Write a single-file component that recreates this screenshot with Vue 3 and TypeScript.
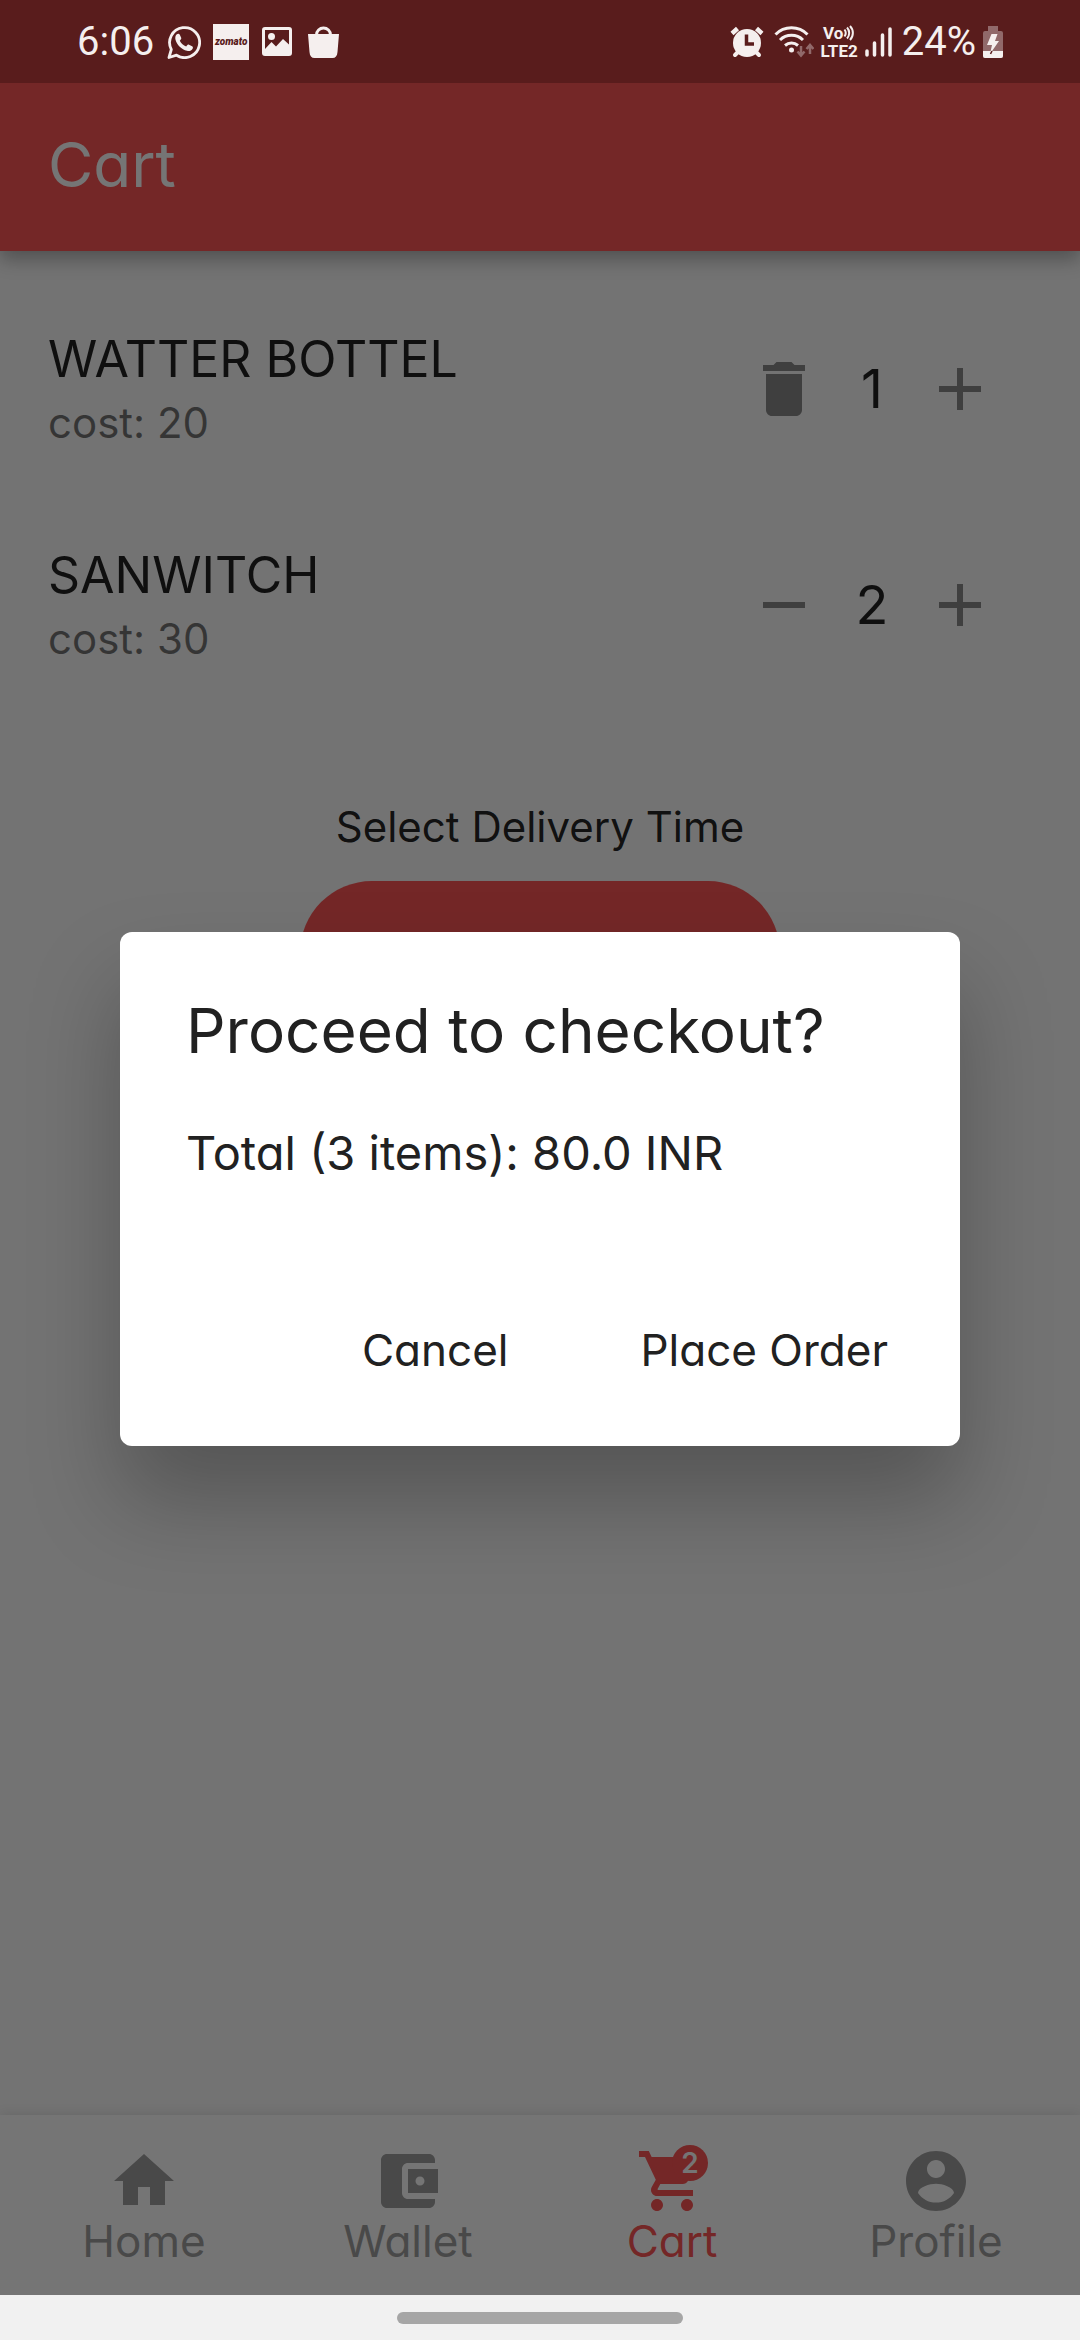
<script setup lang="ts">
import { computed, ref } from 'vue'

interface CartItem {
  name: string
  cost: number
  qty: number
}

interface Tab {
  label: string
  path: string
  active?: boolean
}

const items = ref<CartItem[]>([
  { name: 'WATTER BOTTEL', cost: 20, qty: 1 },
  { name: 'SANWITCH', cost: 30, qty: 2 },
])

const tabs: Tab[] = [
  { label: 'Home', path: 'M10 20v-6h4v6h5v-8h3L12 3 2 12h3v8z' },
  {
    label: 'Wallet',
    path: 'M21 18v1c0 1.1-.9 2-2 2H5c-1.11 0-2-.9-2-2V5c0-1.1.89-2 2-2h14c1.1 0 2 .9 2 2v1h-9c-1.11 0-2 .9-2 2v8c0 1.1.89 2 2 2h9zm-9-2h10V8H12v8zm4-2.5c-.83 0-1.5-.67-1.5-1.5s.67-1.5 1.5-1.5 1.5.67 1.5 1.5-.67 1.5-1.5 1.5z',
  },
  {
    label: 'Cart',
    active: true,
    path: 'M7 18c-1.1 0-1.99.9-1.99 2S5.9 22 7 22s2-.9 2-2-.9-2-2-2zM1 2v2h2l3.6 7.59-1.35 2.45c-.16.28-.25.61-.25.96 0 1.1.9 2 2 2h12v-2H7.42c-.14 0-.25-.11-.25-.25l.03-.12.9-1.63h7.45c.75 0 1.41-.41 1.75-1.03l3.58-6.49c.08-.14.12-.31.12-.48 0-.55-.45-1-1-1H5.21l-.94-2H1zm16 16c-1.1 0-1.99.9-1.99 2s.89 2 1.99 2 2-.9 2-2-.9-2-2-2z',
  },
  {
    label: 'Profile',
    path: 'M12 2C6.48 2 2 6.48 2 12s4.48 10 10 10 10-4.48 10-10S17.52 2 12 2zm0 3c1.66 0 3 1.34 3 3s-1.34 3-3 3-3-1.34-3-3 1.34-3 3-3zm0 14.2c-2.5 0-4.71-1.28-6-3.22.03-1.99 4-3.08 6-3.08 1.99 0 5.97 1.09 6 3.08-1.29 1.94-3.5 3.22-6 3.22z',
  },
]

const dialogOpen = ref(true)
const totalItems = computed(() => items.value.reduce((n, i) => n + i.qty, 0))
const totalCost = computed(() => items.value.reduce((n, i) => n + i.qty * i.cost, 0).toFixed(1))

function decrease(item: CartItem) {
  item.qty -= 1
  items.value = items.value.filter((i) => i.qty > 0)
}
</script>

<template>
  <div class="phone">
    <header class="status">
      <div class="status-group left">
        <span class="clock">6:06</span>
        <svg width="35" height="34" viewBox="-1 0 35 34">
          <path d="M2 32.500 4.300 24.500A15 15 0 1 1 9.500 30.200z" fill="none" stroke="#f5efee" stroke-width="2.800" stroke-linejoin="round" />
          <path d="M9.500 9.600c1.200-1.300 2.700-1.200 3.300.1l1.400 3.100c.3.900-.1 1.500-1.400 2.900 1.500 2.900 3.500 4.700 6.400 5.800 1.300-1.700 1.900-2.200 2.800-1.800l3.100 1.500c1 .5 1 1.300.5 2.500-1 2-3.400 2.700-5.600 2.100C14.400 24.300 10 20 8.500 14.700c-.5-2-.1-3.900 1-5.100z" fill="#f5efee" />
        </svg>
        <span class="brand-tile">zomato</span>
        <svg width="33" height="30" viewBox="-1 0 33 30">
          <path fill-rule="evenodd" d="M3 0h24a3 3 0 0 1 3 3v23a3 3 0 0 1-3 3H3a3 3 0 0 1-3-3V3a3 3 0 0 1 3-3zm0 3v19l6.500-7 4.500 4.500 7-7.500 6 5.500V3zm6.500 3a3.500 3.500 0 1 1 0 7 3.500 3.500 0 0 1 0-7z" fill="#f5efee" />
        </svg>
        <svg width="33" height="32" viewBox="-2 0 33 32">
          <path d="M0 8h31l-1.500 18c-.3 4-2 6-5 6h-18c-3 0-4.700-2-5-6z" fill="#f5efee" />
          <path d="M8.500 9.500V9a7 7 0 0 1 14 0v.5" fill="none" stroke="#f5efee" stroke-width="3" />
        </svg>
      </div>
      <div class="status-group right">
        <svg width="37" height="32" viewBox="0 0 37 32">
          <circle cx="17" cy="17" r="14" fill="#f5efee" />
          <path d="M2 7.500 7.500 2.500M32 7.500 26.500 2.500" stroke="#f5efee" stroke-width="4.500" />
          <path d="m5 29 4-4M29 29l-4-4" stroke="#f5efee" stroke-width="4" stroke-linecap="round" />
          <path d="M16.500 8.500V18H24" fill="none" stroke="#591c1c" stroke-width="3.500" />
        </svg>
        <svg width="40" height="34" viewBox="0 0 40 34">
          <path d="M1.500 9.500a22.500 22.500 0 0 1 32 0M6 15a16.500 16.500 0 0 1 23 0M11 20.500a10 10 0 0 1 13 0" fill="none" stroke="#f5efee" stroke-width="3" />
          <circle cx="17.500" cy="25" r="2.500" fill="#f5efee" />
          <path d="M27 21v9m-3.500-3.500L27 30.500l3.500-4M36 29v-9m-3.500 4 3.500-4 3.500 4" fill="none" stroke="#91696a" stroke-width="2.500" />
        </svg>
        <span class="volte">
          <span class="vo">
            Vo
            <svg width="12" height="16" viewBox="0 0 12 16">
              <path d="M1.500 4.500a6 6 0 0 1 0 7M4 2.500a8 8 0 0 1 0 11M7 1a10 10 0 0 1 0 14" fill="none" stroke="#f5efee" stroke-width="2" />
            </svg>
          </span>
          <span>LTE2</span>
        </span>
        <svg width="30" height="30" viewBox="0 0 30 30">
          <path d="M2 24v4M9.500 16v12M17.500 8v20M25 2v26" stroke="#f5efee" stroke-width="3.500" stroke-linecap="round" />
        </svg>
        <span class="percent">24%</span>
        <svg width="20" height="32" viewBox="0 0 20 32">
          <path d="M5 0h10v5h3a2 2 0 0 1 2 2v23a2 2 0 0 1-2 2H2a2 2 0 0 1-2-2V7a2 2 0 0 1 2-2h3z" fill="#91696a" />
          <path d="M0 25h20v5a2 2 0 0 1-2 2H2a2 2 0 0 1-2-2z" fill="#f5efee" />
          <path d="M8.500 8h6L12 15h4L7 28l2-9H4z" fill="#f5efee" />
          <path d="m9 25-1.500 3" stroke="#591c1c" stroke-width="1.500" />
        </svg>
      </div>
    </header>

    <div class="app">
      <div class="app-bar"><h1>Cart</h1></div>

      <main>
        <ul class="items">
          <li v-for="item in items" :key="item.name">
            <div class="info">
              <span class="name">{{ item.name }}</span>
              <span class="cost">cost: {{ item.cost }}</span>
            </div>
            <div class="stepper">
              <button type="button" :aria-label="item.qty > 1 ? 'Decrease' : 'Remove'" @click="decrease(item)">
                <svg viewBox="0 0 24 24">
                  <path v-if="item.qty > 1" d="M19 13H5v-2h14z" />
                  <path v-else d="M6 19c0 1.100.9 2 2 2h8c1.100 0 2-.9 2-2V7H6zM19 4h-3.500l-1-1h-5l-1 1H5v2h14z" />
                </svg>
              </button>
              <span class="qty">{{ item.qty }}</span>
              <button type="button" aria-label="Increase" @click="item.qty += 1">
                <svg viewBox="0 0 24 24"><path d="M19 13h-6v6h-2v-6H5v-2h6V5h2v6h6z" /></svg>
              </button>
            </div>
          </li>
        </ul>
        <p class="delivery">Select Delivery Time</p>
        <button type="button" class="time" aria-label="Select delivery time"></button>
      </main>

      <nav class="tabs">
        <a v-for="tab in tabs" :key="tab.label" href="#" :class="{ active: tab.active }">
          <span class="tab-icon">
            <svg viewBox="0 0 24 24"><path :d="tab.path" /></svg>
            <span v-if="tab.active" class="badge">{{ items.length }}</span>
          </span>
          {{ tab.label }}
        </a>
      </nav>

      <div v-if="dialogOpen" class="scrim">
        <section class="dialog" role="dialog" aria-labelledby="checkout-title">
          <h2 id="checkout-title">Proceed to checkout?</h2>
          <p>Total ({{ totalItems }} items): {{ totalCost }} INR</p>
          <div class="actions">
            <button type="button" @click="dialogOpen = false">Cancel</button>
            <button type="button" @click="dialogOpen = false">Place Order</button>
          </div>
        </section>
      </div>
    </div>

    <footer class="gesture"><span class="handle"></span></footer>
  </div>
</template>

<style>
body {
  margin: 0;
}
</style>

<style scoped>
.phone {
  display: flex;
  flex-direction: column;
  min-height: 100vh;
  font-family: Inter, 'Liberation Sans', sans-serif;
  font-feature-settings: 'cv11';
  font-size: 42px;
  color: rgba(0, 0, 0, 0.87);
}

button {
  padding: 0;
  border: 0;
  background: none;
  font: inherit;
  font-feature-settings: inherit;
  color: inherit;
}

svg {
  display: block;
  flex: none;
}

.status {
  display: flex;
  justify-content: space-between;
  align-items: center;
  height: 83px;
  padding: 0 77px;
  background: #591c1c;
  color: #f5efee;
  font-family: Roboto, sans-serif;
  font-size: 40px;
  line-height: 48px;
}

.status-group {
  display: flex;
  align-items: center;
}

.left {
  gap: 12px;
}

.right {
  gap: 7px;
}

.brand-tile {
  width: 36px;
  background: #f5efee;
  color: #591c1c;
  font-size: 10px;
  font-style: italic;
  font-weight: 900;
  line-height: 36px;
  text-align: center;
}

.volte {
  display: flex;
  flex-direction: column;
  align-items: center;
  font-size: 17px;
  font-weight: 700;
  line-height: 18px;
}

.vo {
  display: flex;
  align-items: center;
}

.app {
  position: relative;
  display: flex;
  flex: 1;
  flex-direction: column;
  overflow: hidden;
  background: #fafafa;
}

.app-bar {
  padding: 46px 48px 50px;
  background: #fd5555;
  color: #fff;
  box-shadow: 0 8px 18px rgba(0, 0, 0, 0.3);
}

h1,
h2 {
  margin: 0;
  font-size: 62px;
  font-weight: 400;
  line-height: 72px;
}

main {
  display: flex;
  flex: 1;
  flex-direction: column;
  align-items: center;
}

.items {
  align-self: stretch;
  margin: 30px 0 88px;
  padding: 0;
  list-style: none;
}

.items li {
  display: flex;
  justify-content: space-between;
  align-items: center;
  height: 216px;
  padding: 0 76px 0 48px;
}

.info {
  display: flex;
  flex-direction: column;
}

.name {
  font-size: 50px;
  line-height: 68px;
}

.cost {
  color: rgba(0, 0, 0, 0.54);
  line-height: 60px;
}

.stepper {
  display: grid;
  grid-template-columns: repeat(3, 88px);
  place-items: center;
}

.stepper svg {
  width: 72px;
  height: 72px;
  fill: rgba(0, 0, 0, 0.45);
}

.qty {
  font-size: 54px;
  line-height: 72px;
}

.delivery {
  margin: 0 0 28px;
  line-height: 52px;
}

.time {
  width: 480px;
  height: 144px;
  border-radius: 72px;
  background: #fd5555;
}

.tabs {
  display: flex;
  padding: 30px 12px;
  background: #fff;
  box-shadow: 0 0 12px rgba(0, 0, 0, 0.12);
}

.tabs a {
  display: flex;
  flex: 1;
  flex-direction: column;
  align-items: center;
  color: #a0a0a0;
  font-size: 44px;
  line-height: 48px;
  text-decoration: none;
}

.tabs .active {
  color: #fd5555;
}

.tab-icon {
  position: relative;
}

.tab-icon svg {
  width: 72px;
  height: 72px;
  fill: currentColor;
}

.badge {
  position: absolute;
  top: 0;
  right: 0;
  width: 36px;
  border-radius: 18px;
  background: #fd5555;
  color: #fff;
  font-size: 28px;
  font-weight: 600;
  line-height: 36px;
  text-align: center;
}

.scrim {
  position: absolute;
  inset: 0;
  display: flex;
  align-items: center;
  padding: 0 120px;
  background: rgba(0, 0, 0, 0.54);
}

.dialog {
  flex: 1;
  padding: 63px 24px 42px 66px;
  border-radius: 12px;
  background: #fff;
  color: #212121;
  box-shadow: 0 54px 90px rgba(0, 0, 0, 0.26);
}

.dialog p {
  margin: 56px 0 113px;
  font-size: 47px;
  line-height: 60px;
}

.actions {
  display: flex;
  justify-content: flex-end;
  gap: 36px;
  font-size: 44px;
}

.actions button {
  padding: 0 48px;
  line-height: 108px;
}

.gesture {
  display: flex;
  justify-content: center;
  align-items: center;
  height: 45px;
  background: #f1f1f1;
}

.handle {
  width: 286px;
  height: 12px;
  border-radius: 6px;
  background: #a6a6a6;
}
</style>
